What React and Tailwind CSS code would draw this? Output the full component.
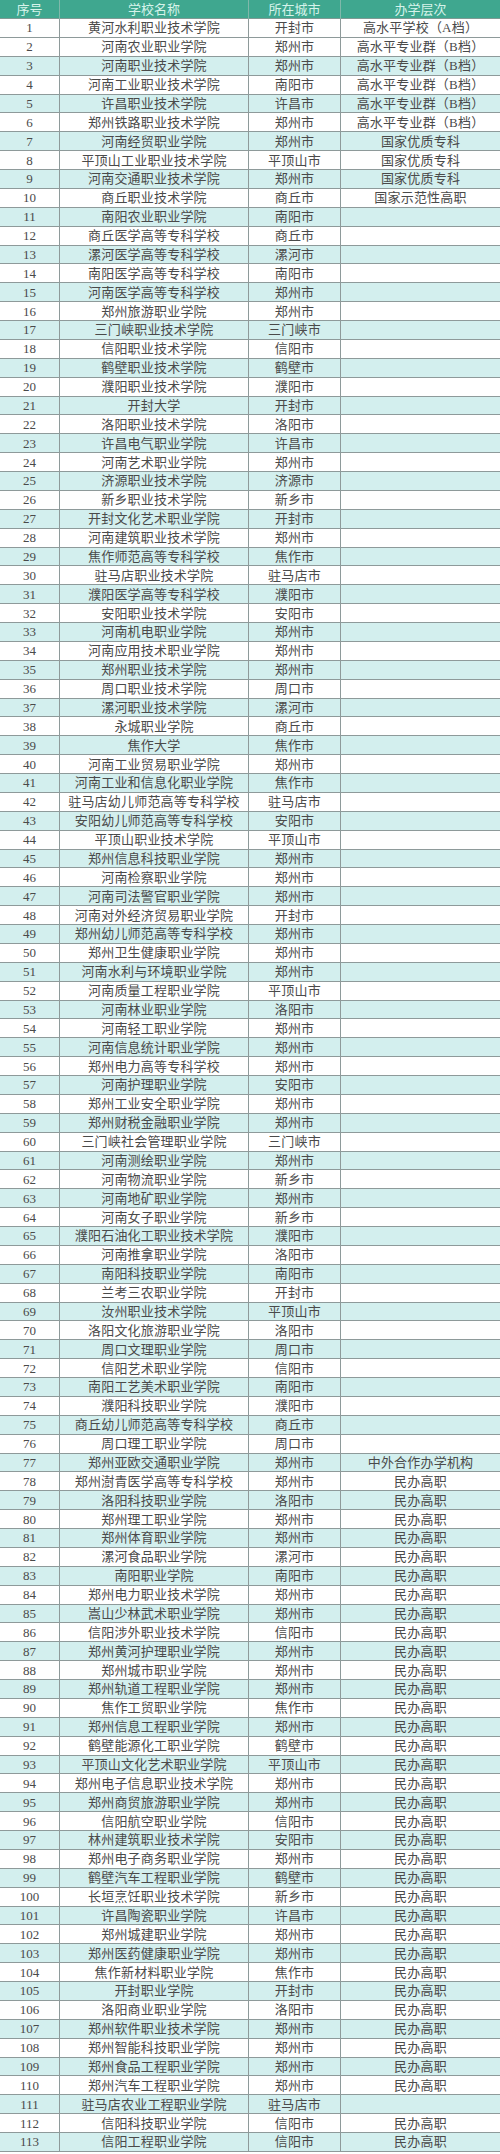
import React from "react";

const rows = [
  ["黄河水利职业技术学院", "开封市", "高水平学校（A档）"],
  ["河南农业职业学院", "郑州市", "高水平专业群（B档）"],
  ["河南职业技术学院", "郑州市", "高水平专业群（B档）"],
  ["河南工业职业技术学院", "南阳市", "高水平专业群（B档）"],
  ["许昌职业技术学院", "许昌市", "高水平专业群（B档）"],
  ["郑州铁路职业技术学院", "郑州市", "高水平专业群（B档）"],
  ["河南经贸职业学院", "郑州市", "国家优质专科"],
  ["平顶山工业职业技术学院", "平顶山市", "国家优质专科"],
  ["河南交通职业技术学院", "郑州市", "国家优质专科"],
  ["商丘职业技术学院", "商丘市", "国家示范性高职"],
  ["南阳农业职业学院", "南阳市", ""],
  ["商丘医学高等专科学校", "商丘市", ""],
  ["漯河医学高等专科学校", "漯河市", ""],
  ["南阳医学高等专科学校", "南阳市", ""],
  ["河南医学高等专科学校", "郑州市", ""],
  ["郑州旅游职业学院", "郑州市", ""],
  ["三门峡职业技术学院", "三门峡市", ""],
  ["信阳职业技术学院", "信阳市", ""],
  ["鹤壁职业技术学院", "鹤壁市", ""],
  ["濮阳职业技术学院", "濮阳市", ""],
  ["开封大学", "开封市", ""],
  ["洛阳职业技术学院", "洛阳市", ""],
  ["许昌电气职业学院", "许昌市", ""],
  ["河南艺术职业学院", "郑州市", ""],
  ["济源职业技术学院", "济源市", ""],
  ["新乡职业技术学院", "新乡市", ""],
  ["开封文化艺术职业学院", "开封市", ""],
  ["河南建筑职业技术学院", "郑州市", ""],
  ["焦作师范高等专科学校", "焦作市", ""],
  ["驻马店职业技术学院", "驻马店市", ""],
  ["濮阳医学高等专科学校", "濮阳市", ""],
  ["安阳职业技术学院", "安阳市", ""],
  ["河南机电职业学院", "郑州市", ""],
  ["河南应用技术职业学院", "郑州市", ""],
  ["郑州职业技术学院", "郑州市", ""],
  ["周口职业技术学院", "周口市", ""],
  ["漯河职业技术学院", "漯河市", ""],
  ["永城职业学院", "商丘市", ""],
  ["焦作大学", "焦作市", ""],
  ["河南工业贸易职业学院", "郑州市", ""],
  ["河南工业和信息化职业学院", "焦作市", ""],
  ["驻马店幼儿师范高等专科学校", "驻马店市", ""],
  ["安阳幼儿师范高等专科学校", "安阳市", ""],
  ["平顶山职业技术学院", "平顶山市", ""],
  ["郑州信息科技职业学院", "郑州市", ""],
  ["河南检察职业学院", "郑州市", ""],
  ["河南司法警官职业学院", "郑州市", ""],
  ["河南对外经济贸易职业学院", "开封市", ""],
  ["郑州幼儿师范高等专科学校", "郑州市", ""],
  ["郑州卫生健康职业学院", "郑州市", ""],
  ["河南水利与环境职业学院", "郑州市", ""],
  ["河南质量工程职业学院", "平顶山市", ""],
  ["河南林业职业学院", "洛阳市", ""],
  ["河南轻工职业学院", "郑州市", ""],
  ["河南信息统计职业学院", "郑州市", ""],
  ["郑州电力高等专科学校", "郑州市", ""],
  ["河南护理职业学院", "安阳市", ""],
  ["郑州工业安全职业学院", "郑州市", ""],
  ["郑州财税金融职业学院", "郑州市", ""],
  ["三门峡社会管理职业学院", "三门峡市", ""],
  ["河南测绘职业学院", "郑州市", ""],
  ["河南物流职业学院", "新乡市", ""],
  ["河南地矿职业学院", "郑州市", ""],
  ["河南女子职业学院", "新乡市", ""],
  ["濮阳石油化工职业技术学院", "濮阳市", ""],
  ["河南推拿职业学院", "洛阳市", ""],
  ["南阳科技职业学院", "南阳市", ""],
  ["兰考三农职业学院", "开封市", ""],
  ["汝州职业技术学院", "平顶山市", ""],
  ["洛阳文化旅游职业学院", "洛阳市", ""],
  ["周口文理职业学院", "周口市", ""],
  ["信阳艺术职业学院", "信阳市", ""],
  ["南阳工艺美术职业学院", "南阳市", ""],
  ["濮阳科技职业学院", "濮阳市", ""],
  ["商丘幼儿师范高等专科学校", "商丘市", ""],
  ["周口理工职业学院", "周口市", ""],
  ["郑州亚欧交通职业学院", "郑州市", "中外合作办学机构"],
  ["郑州澍青医学高等专科学校", "郑州市", "民办高职"],
  ["洛阳科技职业学院", "洛阳市", "民办高职"],
  ["郑州理工职业学院", "郑州市", "民办高职"],
  ["郑州体育职业学院", "郑州市", "民办高职"],
  ["漯河食品职业学院", "漯河市", "民办高职"],
  ["南阳职业学院", "南阳市", "民办高职"],
  ["郑州电力职业技术学院", "郑州市", "民办高职"],
  ["嵩山少林武术职业学院", "郑州市", "民办高职"],
  ["信阳涉外职业技术学院", "信阳市", "民办高职"],
  ["郑州黄河护理职业学院", "郑州市", "民办高职"],
  ["郑州城市职业学院", "郑州市", "民办高职"],
  ["郑州轨道工程职业学院", "郑州市", "民办高职"],
  ["焦作工贸职业学院", "焦作市", "民办高职"],
  ["郑州信息工程职业学院", "郑州市", "民办高职"],
  ["鹤壁能源化工职业学院", "鹤壁市", "民办高职"],
  ["平顶山文化艺术职业学院", "平顶山市", "民办高职"],
  ["郑州电子信息职业技术学院", "郑州市", "民办高职"],
  ["郑州商贸旅游职业学院", "郑州市", "民办高职"],
  ["信阳航空职业学院", "信阳市", "民办高职"],
  ["林州建筑职业技术学院", "安阳市", "民办高职"],
  ["郑州电子商务职业学院", "郑州市", "民办高职"],
  ["鹤壁汽车工程职业学院", "鹤壁市", "民办高职"],
  ["长垣烹饪职业技术学院", "新乡市", "民办高职"],
  ["许昌陶瓷职业学院", "许昌市", "民办高职"],
  ["郑州城建职业学院", "郑州市", "民办高职"],
  ["郑州医药健康职业学院", "郑州市", "民办高职"],
  ["焦作新材料职业学院", "焦作市", "民办高职"],
  ["开封职业学院", "开封市", "民办高职"],
  ["洛阳商业职业学院", "洛阳市", "民办高职"],
  ["郑州软件职业技术学院", "郑州市", "民办高职"],
  ["郑州智能科技职业学院", "郑州市", "民办高职"],
  ["郑州食品工程职业学院", "郑州市", "民办高职"],
  ["郑州汽车工程职业学院", "郑州市", "民办高职"],
  ["驻马店农业工程职业学院", "驻马店市", ""],
  ["信阳科技职业学院", "信阳市", "民办高职"],
  ["信阳工程职业学院", "信阳市", "民办高职"],
];

const cols = "grid grid-cols-[60px_189px_92px_159px]";

function App() {
  return (
    <div
      className="w-[500px] bg-white text-[13px] text-[#4a4a4a]"
      style={{ fontFamily: '"Liberation Serif", "Noto Sans CJK SC", serif' }}
    >
      {/* header */}
      <div className={`${cols} h-[19px] bg-[#3fa78f] text-[#d6f3ea] border-b border-[#7f9a94]`}>
        <div className="flex items-center justify-center border-r border-[#7fb8aa]">序号</div>
        <div className="flex items-center justify-center border-r border-[#7fb8aa]">学校名称</div>
        <div className="flex items-center justify-center border-r border-[#7fb8aa]">所在城市</div>
        <div className="flex items-center justify-center">办学层次</div>
      </div>

      {rows.map((r, i) => {
        const n = i + 1;
        const shade = n % 2 === 1 && n > 1;
        return (
          <div
            key={n}
            className={`${cols} h-[18.88px] border-b border-[#8e9a9a] leading-none ${
              shade ? "bg-[#d3efee]" : "bg-white"
            }`}
          >
            <div className="flex items-center justify-center border-r border-[#8e9a9a]">{n}</div>
            <div className="flex items-center justify-center border-r border-[#8e9a9a] tracking-[0.2px] whitespace-nowrap">
              {r[0]}
            </div>
            <div className="flex items-center justify-center border-r border-[#8e9a9a] tracking-[0.2px] whitespace-nowrap">
              {r[1]}
            </div>
            <div className="flex items-center justify-center tracking-[0.2px] whitespace-nowrap">{r[2]}</div>
          </div>
        );
      })}
    </div>
  );
}

export default App;
